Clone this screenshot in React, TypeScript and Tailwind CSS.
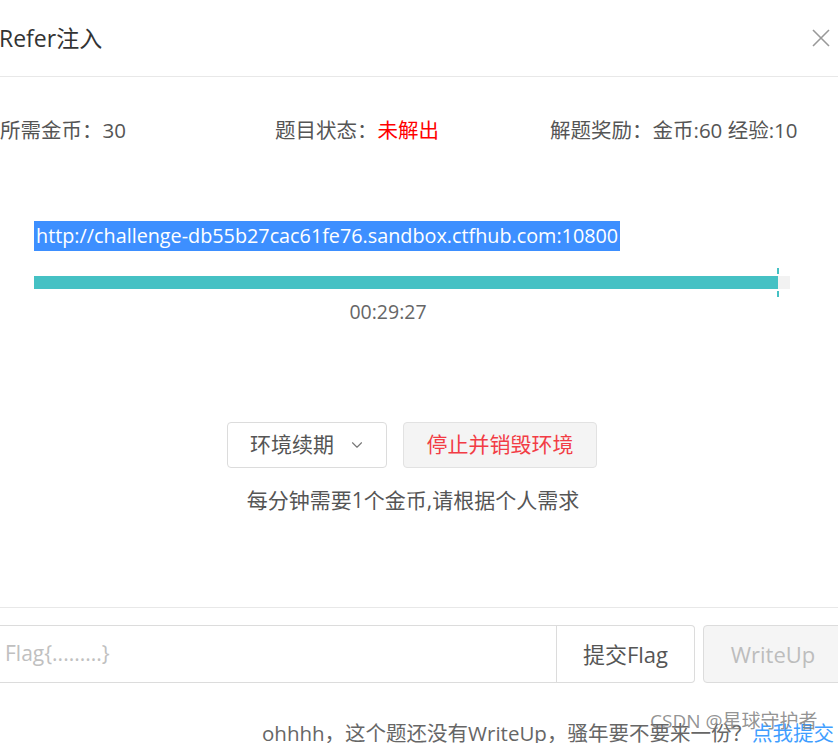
import { ChevronDown } from 'lucide-react'

const font = { fontFamily: '"Open Sans", "Noto Sans CJK SC", sans-serif' }

export default function App() {
  return (
    <div
      className="relative w-[838px] h-[743px] overflow-hidden bg-white text-[#555]"
      style={font}
    >
      {/* 头部 */}
      <div className="flex h-[77px] items-center justify-between border-b border-[#e8e8e8] pr-[7px]">
        <h1 className="text-[23px] text-[#333] -ml-[1px]">Refer注入</h1>
        <svg width="20" height="20" viewBox="0 0 20 20" className="text-[#999]">
          <path d="M2 2 L18 18 M18 2 L2 18" stroke="currentColor" strokeWidth="1.6" fill="none" />
        </svg>
      </div>

      {/* 题目信息 */}
      <div className="flex pt-[40px] text-[20.5px] leading-[26px]">
        <div className="w-[275px]">所需金币：30</div>
        <div className="w-[275px]">
          题目状态：<span className="text-[#ff0000]">未解出</span>
        </div>
        <div>解题奖励：金币:60 经验:10</div>
      </div>

      {/* 环境地址 */}
      <div className="pl-[34px] pt-[78px]">
        <span className="inline-block bg-[#3d8fff] px-[2px] text-[19.8px] leading-[30px] text-white">
          http://challenge-db55b27cac61fe76.sandbox.ctfhub.com:10800
        </span>
      </div>

      {/* 剩余时间 */}
      <div className="relative ml-[34px] mt-[25px] flex h-[13px] w-[756px] bg-[#f2f2f2]">
        <div className="h-full w-[744px] bg-[#45c1c4]" />
        <div className="absolute left-[743px] -top-[8px] h-[6px] w-[2px] bg-[#45c1c4]" />
        <div className="absolute left-[743px] top-[15px] h-[6px] w-[2px] bg-[#45c1c4]" />
      </div>
      <div className="mt-[11px] w-[776px] text-center text-[19.5px] leading-[24px] text-[#666]">
        00:29:27
      </div>

      {/* 操作按钮 */}
      <div className="mt-[98px] flex justify-center gap-[16px] pr-[14px]">
        <button className="flex h-[46px] w-[160px] items-center gap-[14px] rounded-[4px] border border-[#dcdcdc] bg-white pl-[22px] text-[21px] text-[#555]">
          环境续期
          <ChevronDown size={18} strokeWidth={1.5} className="text-[#777]" />
        </button>
        <button className="h-[46px] w-[194px] rounded-[4px] border border-[#e2e2e2] bg-[#f4f4f4] text-[21px] text-[#f23c45]">
          停止并销毁环境
        </button>
      </div>
      <div className="mt-[18px] pr-[12px] text-center text-[21px] leading-[28px]">
        每分钟需要1个金币,请根据个人需求
      </div>

      {/* 提交 Flag */}
      <div className="mt-[93px] border-t border-[#e8e8e8]" />
      <div className="mt-[17px] flex h-[58px]">
        <div className="flex w-[557px] shrink-0 items-center border border-l-0 border-[#dcdcdc] pl-[5px] text-[21px] text-[#c0c0c0]">
          Flag{'{.........}'}
        </div>
        <button className="h-full w-[138px] shrink-0 rounded-r-[4px] border border-l-0 border-[#dcdcdc] bg-white text-[22px] text-[#555]">
          提交Flag
        </button>
        <button className="ml-[8px] h-full w-[140px] shrink-0 rounded-[4px] border border-[#dcdcdc] bg-[#f5f5f5] text-[22px] text-[#bdbdbd]">
          WriteUp
        </button>
      </div>

      <div className="mt-[36px] whitespace-nowrap pl-[262px] text-[20.5px] leading-[28px] text-[#666]">
        ohhhh，这个题还没有WriteUp，骚年要不要来一份？<span className="text-[#409eff]">点我提交</span>
      </div>

      {/* 水印 */}
      <div className="absolute left-[650px] top-[707px] whitespace-nowrap text-[19px] text-[#777]/80">
        CSDN @星球守护者
      </div>
    </div>
  )
}
